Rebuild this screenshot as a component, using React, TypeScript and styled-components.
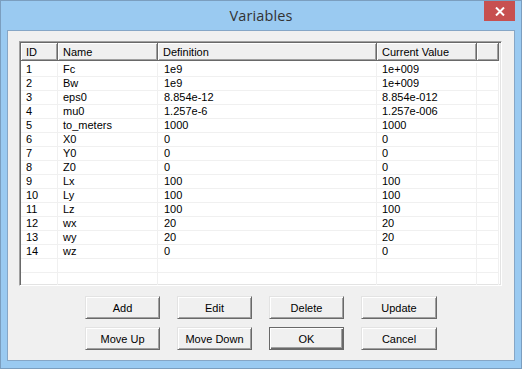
import styled, { createGlobalStyle } from "styled-components";

const GlobalStyle = createGlobalStyle`
  html, body {
    margin: 0;
    padding: 0;
    background: #ffffff;
  }
  body {
    font-family: "Liberation Sans", Arial, sans-serif;
    font-size: 11px;
    color: #000;
  }
`;

interface Variable {
  id: number;
  name: string;
  definition: string;
  value: string;
}

const variables: Variable[] = [
  { id: 1, name: "Fc", definition: "1e9", value: "1e+009" },
  { id: 2, name: "Bw", definition: "1e9", value: "1e+009" },
  { id: 3, name: "eps0", definition: "8.854e-12", value: "8.854e-012" },
  { id: 4, name: "mu0", definition: "1.257e-6", value: "1.257e-006" },
  { id: 5, name: "to_meters", definition: "1000", value: "1000" },
  { id: 6, name: "X0", definition: "0", value: "0" },
  { id: 7, name: "Y0", definition: "0", value: "0" },
  { id: 8, name: "Z0", definition: "0", value: "0" },
  { id: 9, name: "Lx", definition: "100", value: "100" },
  { id: 10, name: "Ly", definition: "100", value: "100" },
  { id: 11, name: "Lz", definition: "100", value: "100" },
  { id: 12, name: "wx", definition: "20", value: "20" },
  { id: 13, name: "wy", definition: "20", value: "20" },
  { id: 14, name: "wz", definition: "0", value: "0" },
];

const COLUMNS = "37px 100px 219px 100px 22px";

const Window = styled.div`
  width: 522px;
  height: 369px;
  box-sizing: border-box;
  border: 1px solid #7b9ebf;
  background: #9acaf1;
  display: flex;
  flex-direction: column;
`;

const TitleBar = styled.div`
  height: 29px;
  display: grid;
  grid-template-columns: 1fr auto 1fr;
  align-items: start;
`;

const Title = styled.div`
  grid-column: 2;
  font-family: "Open Sans", "Noto Sans", sans-serif;
  font-size: 14.5px;
  color: #333;
  line-height: 29px;
  letter-spacing: 0.1px;
`;

const CloseButton = styled.div`
  grid-column: 3;
  justify-self: end;
  width: 31px;
  height: 20px;
  margin-right: 6px;
  background: #c75050;
  display: flex;
  align-items: center;
  justify-content: center;
`;

const Client = styled.div`
  flex: 1;
  margin: 0 6px 7px;
  border: 1px solid #86a6c6;
  background: #f0f0f0;
  padding: 10px 12px 0 11px;
  display: flex;
  flex-direction: column;
`;

const ListView = styled.div`
  height: 245px;
  box-sizing: border-box;
  border: 1px solid;
  border-color: #a0a0a0 #ffffff #ffffff #a0a0a0;
  box-shadow: inset 1px 1px 0 #696969, inset -1px -1px 0 #e3e3e3;
  padding: 1px;
  background: #fff;
  overflow: hidden;
`;

const HeaderRow = styled.div`
  display: grid;
  grid-template-columns: ${COLUMNS};
  height: 18px;
  background: #f0f0f0;
`;

const HeaderCell = styled.div`
  box-sizing: border-box;
  padding: 2px 5px 0;
  line-height: 15px;
  border-right: 1px solid #696969;
  border-bottom: 1px solid #696969;
  box-shadow: inset 1px 1px 0 #ffffff, inset -1px -1px 0 #a0a0a0;
  white-space: nowrap;
  overflow: hidden;
`;

const Body = styled.div`
  padding-top: 2px;
`;

const Row = styled.div`
  display: grid;
  grid-template-columns: ${COLUMNS};
  height: 14px;
`;

const Cell = styled.div<{ $wide?: boolean }>`
  box-sizing: border-box;
  padding: 0 ${(p) => (p.$wide ? 6 : 5)}px;
  line-height: 13px;
  border-right: 1px solid #f0f0f0;
  border-bottom: 1px solid #f0f0f0;
  white-space: nowrap;
  overflow: hidden;
`;

const ButtonGrid = styled.div`
  display: grid;
  grid-template-columns: 75px 75px 75px 76px;
  column-gap: 17px;
  row-gap: 8px;
  margin: 10px 0 0 66px;
`;

const Button = styled.div<{ $default?: boolean }>`
  height: 23px;
  box-sizing: border-box;
  border: 1px solid;
  border-color: ${(p) =>
    p.$default ? "#696969" : "#e3e3e3 #696969 #696969 #e3e3e3"};
  box-shadow: ${(p) =>
    p.$default
      ? "inset 1px 1px 0 #ffffff, inset -1px -1px 0 #696969, inset -2px -2px 0 #a0a0a0"
      : "inset 1px 1px 0 #ffffff, inset -1px -1px 0 #a0a0a0"};
  background: #f0f0f0;
  display: flex;
  align-items: center;
  justify-content: center;
  font-size: 11px;
  color: #000;
`;

const emptyRows = [0, 1];

export default function App() {
  return (
    <>
      <GlobalStyle />
      <Window>
        <TitleBar>
          <Title>Variables</Title>
          <CloseButton>
            <svg width="10" height="9" viewBox="0 0 10 9">
              <path d="M1 0.5 L9 8.5 M9 0.5 L1 8.5" stroke="#fff" strokeWidth="2" />
            </svg>
          </CloseButton>
        </TitleBar>
        <Client>
          <ListView>
            <HeaderRow>
              <HeaderCell>ID</HeaderCell>
              <HeaderCell>Name</HeaderCell>
              <HeaderCell>Definition</HeaderCell>
              <HeaderCell>Current Value</HeaderCell>
              <HeaderCell />
            </HeaderRow>
            <Body>
              {variables.map((v) => (
                <Row key={v.id}>
                  <Cell>{v.id}</Cell>
                  <Cell>{v.name}</Cell>
                  <Cell $wide>{v.definition}</Cell>
                  <Cell>{v.value}</Cell>
                  <Cell />
                </Row>
              ))}
              {emptyRows.map((i) => (
                <Row key={`e${i}`}>
                  <Cell />
                  <Cell />
                  <Cell />
                  <Cell />
                  <Cell />
                </Row>
              ))}
            </Body>
          </ListView>
          <ButtonGrid>
            <Button>Add</Button>
            <Button>Edit</Button>
            <Button>Delete</Button>
            <Button>Update</Button>
            <Button>Move Up</Button>
            <Button>Move Down</Button>
            <Button $default>OK</Button>
            <Button>Cancel</Button>
          </ButtonGrid>
        </Client>
      </Window>
    </>
  );
}
